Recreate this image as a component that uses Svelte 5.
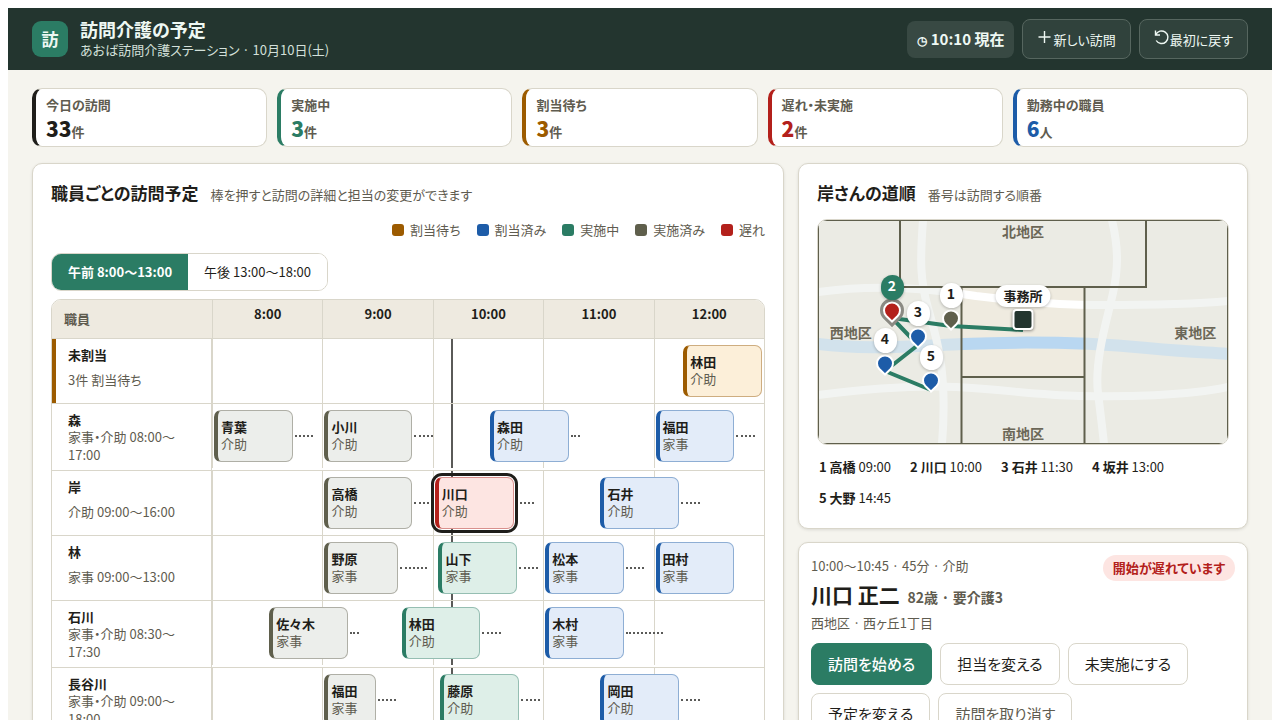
<script lang="ts">
  type Status = 'waiting' | 'assigned' | 'active' | 'done' | 'late';

  interface Visit {
    name: string;
    kind: string;
    start: string;
    minutes: number;
    status: Status;
    travel?: number;
  }

  interface StaffRow {
    name: string;
    note: string;
    visits: Visit[];
  }

  const statusLabels: { status: Status; label: string }[] = [
    { status: 'waiting', label: '割当待ち' },
    { status: 'assigned', label: '割当済み' },
    { status: 'active', label: '実施中' },
    { status: 'done', label: '実施済み' },
    { status: 'late', label: '遅れ' }
  ];

  const stats = [
    { label: '今日の訪問', value: 33, unit: '件', tone: 'ink' },
    { label: '実施中', value: 3, unit: '件', tone: 'active' },
    { label: '割当待ち', value: 3, unit: '件', tone: 'waiting' },
    { label: '遅れ・未実施', value: 2, unit: '件', tone: 'late' },
    { label: '勤務中の職員', value: 6, unit: '人', tone: 'assigned' }
  ];

  const rows: StaffRow[] = [
    {
      name: '未割当',
      note: '3件 割当待ち',
      visits: [{ name: '林田', kind: '介助', start: '12:15', minutes: 45, status: 'waiting' }]
    },
    {
      name: '森',
      note: '家事・介助 08:00〜17:00',
      visits: [
        { name: '青葉', kind: '介助', start: '8:00', minutes: 45, status: 'done', travel: 10 },
        { name: '小川', kind: '介助', start: '9:00', minutes: 50, status: 'done', travel: 10 },
        { name: '森田', kind: '介助', start: '10:30', minutes: 45, status: 'assigned', travel: 5 },
        { name: '福田', kind: '家事', start: '12:00', minutes: 45, status: 'assigned', travel: 10 }
      ]
    },
    {
      name: '岸',
      note: '介助 09:00〜16:00',
      visits: [
        { name: '高橋', kind: '介助', start: '9:00', minutes: 50, status: 'done', travel: 10 },
        { name: '川口', kind: '介助', start: '10:00', minutes: 45, status: 'late', travel: 10 },
        { name: '石井', kind: '介助', start: '11:30', minutes: 45, status: 'assigned', travel: 10 }
      ]
    },
    {
      name: '林',
      note: '家事 09:00〜13:00',
      visits: [
        { name: '野原', kind: '家事', start: '9:00', minutes: 42, status: 'done', travel: 15 },
        { name: '山下', kind: '家事', start: '10:02', minutes: 45, status: 'active', travel: 10 },
        { name: '松本', kind: '家事', start: '11:00', minutes: 45, status: 'assigned', travel: 10 },
        { name: '田村', kind: '家事', start: '12:00', minutes: 45, status: 'assigned' }
      ]
    },
    {
      name: '石川',
      note: '家事・介助 08:30〜17:30',
      visits: [
        { name: '佐々木', kind: '家事', start: '8:30', minutes: 45, status: 'done', travel: 5 },
        { name: '林田', kind: '介助', start: '9:42', minutes: 45, status: 'active', travel: 10 },
        { name: '木村', kind: '家事', start: '11:00', minutes: 45, status: 'assigned', travel: 20 }
      ]
    },
    {
      name: '長谷川',
      note: '家事・介助 09:00〜18:00',
      visits: [
        { name: '福田', kind: '家事', start: '9:00', minutes: 30, status: 'done', travel: 10 },
        { name: '藤原', kind: '介助', start: '10:03', minutes: 45, status: 'active', travel: 10 },
        { name: '岡田', kind: '介助', start: '11:30', minutes: 45, status: 'assigned', travel: 10 }
      ]
    }
  ];

  // x and y are the tip of the pin, in map units (410 x 224)
  const stops = [
    { no: 1, name: '高橋', time: '09:00', x: 133, y: 108, status: 'done' },
    { no: 2, name: '川口', time: '10:00', x: 74, y: 100, status: 'late' },
    { no: 3, name: '石井', time: '11:30', x: 100, y: 126, status: 'assigned' },
    { no: 4, name: '坂井', time: '13:00', x: 67, y: 153, status: 'assigned' },
    { no: 5, name: '大野', time: '14:45', x: 113, y: 170, status: 'assigned' }
  ];

  const periods = [
    { id: 'am', label: '午前 8:00〜13:00', from: 8 },
    { id: 'pm', label: '午後 13:00〜18:00', from: 13 }
  ];

  const NOW = '10:10';
  const SPAN = 5 * 60;

  let period = $state('am');
  let selected = $state('川口');

  const firstHour = $derived(periods.find((p) => p.id === period)?.from ?? 8);
  const hours = $derived([0, 1, 2, 3, 4].map((i) => firstHour + i));

  function toMinutes(time: string) {
    const [h, m] = time.split(':').map(Number);
    return h * 60 + m;
  }

  function offset(time: string, extra = 0) {
    return ((toMinutes(time) + extra - firstHour * 60) / SPAN) * 100;
  }

  function isVisible(time: string) {
    const x = offset(time);
    return x >= 0 && x < 100;
  }

  function reset() {
    period = 'am';
    selected = '川口';
  }
</script>

<div class="page">
  <header class="topbar">
    <div class="logo" aria-hidden="true">訪</div>
    <div class="heading">
      <h1>訪問介護の予定</h1>
      <p>あおば訪問介護ステーション · 10月10日(土)</p>
    </div>
    <div class="actions">
      <span class="clock"><span class="clock-icon">◷</span> {NOW} 現在</span>
      <button class="ghost">
        <svg width="16" height="16" viewBox="0 0 16 16" aria-hidden="true">
          <path d="M7.5 2v12M1.5 8h12" />
        </svg>新しい訪問
      </button>
      <button class="ghost" onclick={reset}>
        <svg width="16" height="16" viewBox="0 0 16 16" aria-hidden="true">
          <path d="M1.5 1.5v4.5H6M1.8 5.8A6.3 6.3 0 1 1 2.2 11.5" />
        </svg>最初に戻す
      </button>
    </div>
  </header>

  <main>
    <section class="stats">
      {#each stats as stat (stat.label)}
        <div class="stat {stat.tone}">
          <span class="stat-label">{stat.label}</span>
          <span class="stat-value"><strong>{stat.value}</strong>{stat.unit}</span>
        </div>
      {/each}
    </section>

    <div class="columns">
      <section class="panel">
        <div class="panel-head">
          <h2>職員ごとの訪問予定</h2>
          <span class="hint">棒を押すと訪問の詳細と担当の変更ができます</span>
        </div>
        <ul class="legend">
          {#each statusLabels as item (item.status)}
            <li class={item.status}>{item.label}</li>
          {/each}
        </ul>
        <div class="tabs">
          {#each periods as p (p.id)}
            <button class:on={period === p.id} aria-pressed={period === p.id} onclick={() => (period = p.id)}>
              {p.label}
            </button>
          {/each}
        </div>

        <div class="board">
          <div class="row board-head">
            <div class="corner">職員</div>
            <div class="hours">
              {#each hours as hour (hour)}
                <span>{hour}:00</span>
              {/each}
            </div>
          </div>
          {#each rows as row (row.name)}
            <div class="row">
              <div class="staff" class:unassigned={row.name === '未割当'}>
                <strong>{row.name}</strong>
                <span>{row.note}</span>
              </div>
              <div class="track">
                {#each hours as hour (hour)}
                  <span class="slot"></span>
                {/each}
                {#if isVisible(NOW)}
                  <span class="now" style="left: {offset(NOW)}%"></span>
                {/if}
                {#each row.visits as visit (visit.start)}
                  {#if isVisible(visit.start)}
                    {#if visit.travel}
                      <span
                        class="travel"
                        style="left: {offset(visit.start, visit.minutes)}%; width: {(visit.travel / SPAN) * 100}%"
                      ></span>
                    {/if}
                    <button
                      class="visit {visit.status}"
                      class:selected={visit.name === selected}
                      style="left: calc({offset(visit.start)}% + 2px); width: calc({(visit.minutes / SPAN) * 100}% - 4px)"
                      onclick={() => (selected = visit.name)}
                    >
                      <strong>{visit.name}</strong>
                      <span>{visit.kind}</span>
                    </button>
                  {/if}
                {/each}
              </div>
            </div>
          {/each}
        </div>
      </section>

      <div class="side">
        <section class="panel">
          <div class="panel-head">
            <h2>岸さんの道順</h2>
            <span class="hint">番号は訪問する順番</span>
          </div>
          <div class="map">
            <svg class="ground" viewBox="0 0 410 224" aria-hidden="true">
              <rect width="410" height="224" fill="#efebe0" />
              <path class="river" d="M0 124C45 130 95 126 145 124C215 121 275 123 329 128S390 132 410 134" />
              <path class="road" d="M0 72C50 65 105 67 158 76C215 83 250 85 279 85S370 85 410 81" />
              <path class="road" d="M0 175C40 170 90 165 138 167C190 170 220 175 262 176S370 176 410 167" />
              <path class="road" d="M105 0C102 40 102 60 110 88S130 150 124 224" />
              <path class="road" d="M294 0C301 30 300 50 295 73S276 140 280 173S284 205 286 224" />
              <path class="zone" d="M82 0H328V67H82Z" />
              <path class="zone" d="M0 0H82V67H143.5V224H0Z" />
              <path class="zone" d="M328 0H410V224H266.5V67H328Z" />
              <path class="zone" d="M143.5 157H266.5V224H143.5Z" />
              <path class="zone-line" d="M0 0H410V224H0ZM82 0V67H328V0M143.5 67V224M266.5 67V224M143.5 157H266.5" />
              <path class="route" d="M205 110L133 106L74 98L100 125L67 151L113 170" />
            </svg>
            <span class="area north">北地区</span>
            <span class="area west">西地区</span>
            <span class="area east">東地区</span>
            <span class="area south">南地区</span>
            <div class="office">
              <span>事務所</span>
              <i></i>
            </div>
            {#each stops as stop (stop.no)}
              <button
                class="stop {stop.status}"
                class:selected={stop.name === selected}
                style="left: {(stop.x / 410) * 100}%; top: {(stop.y / 224) * 100}%"
                aria-label="{stop.no} {stop.name}"
                onclick={() => (selected = stop.name)}
              >
                <span class="badge">{stop.no}</span>
                <svg width="26" height="30" viewBox="0 0 26 30" aria-hidden="true">
                  <path class="halo" d="M13 24L6.6 17.6A9 9 0 1 1 19.4 17.6Z" />
                  <path class="drop" d="M13 22.5L7.3 17A8 8 0 1 1 18.7 17Z" />
                </svg>
              </button>
            {/each}
          </div>
          <ol class="order">
            {#each stops as stop (stop.no)}
              <li><strong>{stop.no} {stop.name}</strong> {stop.time}</li>
            {/each}
          </ol>
        </section>

        <section class="panel detail">
          <div class="detail-top">
            <span>10:00〜10:45 · 45分 · 介助</span>
            <span class="alert">開始が遅れています</span>
          </div>
          <h3>川口 正二 <small>82歳 · 要介護3</small></h3>
          <p>西地区 · 西ヶ丘1丁目</p>
          <div class="buttons">
            <button class="primary">訪問を始める</button>
            <button>担当を変える</button>
            <button>未実施にする</button>
            <button>予定を変える</button>
            <button class="quiet">訪問を取り消す</button>
          </div>
        </section>
      </div>
    </div>
  </main>
</div>

<style>
  :global(body) {
    margin: 8px;
    background: #fff;
  }

  .page {
    --ink: #1f1e1a;
    --muted: #5f5c50;
    --line: #d9d6ca;
    --green: #2b7c64;
    --blue: #1d5ca8;
    --amber: #9c5b00;
    --olive: #5f5f4c;
    --red: #b3201b;
    background: #f5f4ee;
    color: var(--ink);
    font-family: 'Noto Sans CJK JP', 'Noto Sans', sans-serif;
    font-size: 13px;
    line-height: 18px;
    font-feature-settings: 'palt';
  }

  .page *,
  .page {
    box-sizing: border-box;
  }

  h1,
  h2,
  h3,
  p,
  ul,
  ol {
    margin: 0;
    padding: 0;
    list-style: none;
  }

  button {
    font: inherit;
    font-feature-settings: inherit;
    color: inherit;
    cursor: pointer;
  }

  .waiting { --tone: var(--amber); --tint: #fcefd9; }
  .assigned { --tone: var(--blue); --tint: #e3ecf9; }
  .active { --tone: var(--green); --tint: #deefe8; }
  .done { --tone: var(--olive); --tint: #eceeeb; }
  .late { --tone: var(--red); --tint: #fde5e2; }
  .ink { --tone: var(--ink); }

  .topbar {
    display: flex;
    align-items: center;
    gap: 12px;
    padding: 10px 24px;
    background: #23352f;
    color: #eef8f3;
  }

  .logo {
    display: grid;
    place-items: center;
    width: 36px;
    height: 36px;
    border-radius: 9px;
    background: var(--green);
    font-size: 17px;
    font-weight: 700;
  }

  .heading {
    flex: 1;
  }

  h1 {
    font-size: 18px;
    line-height: 22px;
  }

  .heading p {
    color: #d3e0da;
    line-height: 20px;
  }

  .actions {
    display: flex;
    align-items: center;
    gap: 8px;
  }

  .clock {
    padding: 9px 10px;
    border-radius: 8px;
    background: #384943;
    font-size: 15px;
    font-weight: 700;
  }

  .clock-icon {
    font-size: 12px;
  }

  .ghost {
    height: 40px;
    padding: 0 14px;
    border: 1px solid #56665f;
    border-radius: 8px;
    background: #30423c;
  }

  .ghost svg {
    fill: none;
    stroke: currentColor;
    stroke-width: 1.4;
    vertical-align: 0;
  }

  main {
    padding: 18px 24px 24px;
  }

  .stats {
    display: grid;
    grid-template-columns: repeat(5, 1fr);
    gap: 10px;
    margin-bottom: 16px;
  }

  .stat {
    display: flex;
    flex-direction: column;
    gap: 2px;
    padding: 7px 10px 0;
    border: 1px solid var(--line);
    border-left: 4px solid var(--tone);
    border-radius: 10px;
    background: #fff;
    color: var(--muted);
    font-weight: 600;
  }

  .stat-value {
    height: 30px;
    line-height: 24px;
  }

  .stat strong {
    color: var(--tone);
    font-size: 21px;
  }

  .columns {
    display: grid;
    grid-template-columns: minmax(0, 1fr) 450px;
    align-items: start;
    gap: 14px;
  }

  .side {
    display: grid;
    gap: 13px;
  }

  .panel {
    min-width: 0;
    padding: 18px;
    border: 1px solid var(--line);
    border-radius: 10px;
    background: #fff;
    box-shadow: 0 1px 3px rgba(40, 40, 30, 0.12);
  }

  .panel-head {
    display: flex;
    align-items: baseline;
    gap: 12px;
  }

  h2 {
    font-size: 17px;
    line-height: 22px;
  }

  .hint {
    color: var(--muted);
  }

  .legend {
    display: flex;
    justify-content: flex-end;
    gap: 16px;
    margin: 17px 0 14px;
    color: var(--muted);
  }

  .legend li {
    display: flex;
    align-items: center;
    gap: 6px;
  }

  .legend li::before {
    content: '';
    width: 12px;
    height: 12px;
    border-radius: 3px;
    background: var(--tone);
  }

  .tabs {
    display: flex;
    width: fit-content;
    margin-bottom: 8px;
    border: 1px solid var(--line);
    border-radius: 10px;
    overflow: hidden;
  }

  .tabs button {
    height: 36px;
    padding: 0 16px;
    border: 0;
    background: #fff;
  }

  .tabs .on {
    background: var(--green);
    color: #fff;
    font-weight: 700;
  }

  .board {
    border: 1px solid var(--line);
    border-radius: 10px 10px 0 0;
    overflow: hidden;
  }

  .row {
    display: grid;
    grid-template-columns: 160px 1fr;
    align-items: start;
    border-bottom: 1px solid var(--line);
  }

  .row:last-child {
    border-bottom: 0;
  }

  .board-head {
    align-items: stretch;
    height: 39px;
    background: #eeeae0;
    font-weight: 700;
  }

  .corner {
    padding: 10px 12px;
    color: var(--muted);
  }

  .hours,
  .track {
    display: grid;
    grid-template-columns: repeat(5, 1fr);
  }

  .hours span {
    padding-top: 5px;
    border-left: 1px solid var(--line);
    text-align: center;
  }

  .staff {
    display: grid;
    min-height: 64px;
    padding: 7px 16px 6px;
    border-right: 1px solid var(--line);
  }

  .staff strong {
    line-height: 17px;
  }

  .staff span {
    color: var(--muted);
  }

  .staff.unassigned {
    padding-left: 12px;
    border-left: 4px solid var(--amber);
  }

  .track {
    position: relative;
    height: 64px;
  }

  .slot {
    border-left: 1px solid var(--line);
  }

  .now {
    position: absolute;
    top: 0;
    bottom: 0;
    width: 2px;
    background: #5a5a58;
  }

  .travel {
    position: absolute;
    top: 31px;
    border-top: 2px dotted #5a5a58;
  }

  .visit {
    position: absolute;
    top: 6px;
    display: flex;
    flex-direction: column;
    height: 52px;
    padding: 7px 3px;
    border: 1px solid color-mix(in srgb, var(--tone) 50%, #fff);
    border-left: 4px solid var(--tone);
    border-radius: 7px;
    background: var(--tint);
    line-height: 17px;
    text-align: left;
  }

  .visit span {
    color: var(--muted);
  }

  .visit.selected {
    outline: 3px solid var(--ink);
    outline-offset: 1px;
  }

  .map {
    position: relative;
    margin-top: 15px;
    border: 1px solid var(--line);
    border-radius: 10px;
    overflow: hidden;
  }

  .ground {
    display: block;
    width: 100%;
    fill: none;
  }

  .river {
    stroke: #b9d7f1;
    stroke-width: 12;
  }

  .road {
    stroke: #fff;
    stroke-width: 8;
  }

  .zone {
    fill: #e8ebe8;
    fill-opacity: 0.55;
  }

  .zone-line {
    stroke: var(--olive);
    stroke-width: 2;
  }

  .route {
    stroke: var(--green);
    stroke-width: 4;
    stroke-linejoin: round;
  }

  .area {
    position: absolute;
    color: #6b6757;
    font-size: 14px;
    font-weight: 700;
    white-space: nowrap;
    transform: translate(-50%, -50%);
  }

  .north { left: 50%; top: 5%; }
  .west { left: 8%; top: 50%; }
  .east { left: 92%; top: 50%; }
  .south { left: 50%; top: 95%; }

  .office {
    position: absolute;
    left: 50%;
    top: 49%;
    display: flex;
    flex-direction: column;
    align-items: center;
    gap: 2px;
    transform: translate(-50%, -100%);
  }

  .office span {
    padding: 2px 8px;
    border-radius: 12px;
    background: #fff;
    font-weight: 700;
    white-space: nowrap;
    box-shadow: 0 1px 3px rgba(0, 0, 0, 0.25);
  }

  .office i {
    width: 21px;
    height: 21px;
    border: 2px solid #fff;
    border-radius: 4px;
    background: #23352f;
    box-shadow: 0 1px 3px rgba(0, 0, 0, 0.4);
  }

  .stop {
    position: absolute;
    display: flex;
    flex-direction: column;
    align-items: center;
    padding: 0;
    border: 0;
    background: none;
    transform: translate(-50%, -45px);
  }

  .badge {
    z-index: 1;
    width: 23px;
    height: 25px;
    border-radius: 12px;
    background: #fff;
    font-size: 14px;
    font-weight: 700;
    line-height: 20px;
    box-shadow: 0 1px 3px rgba(0, 0, 0, 0.25);
  }

  .stop svg {
    margin-top: -1px;
    fill: none;
    overflow: visible;
  }

  .drop {
    fill: var(--tone);
    stroke: #fff;
    stroke-width: 2;
  }

  .stop.selected .badge {
    background: var(--green);
    color: #fff;
  }

  .stop.selected .halo {
    stroke: #8b8a83;
    stroke-width: 6;
  }

  .order {
    display: flex;
    flex-wrap: wrap;
    gap: 9px 19px;
    padding: 11px 2px 1px;
    line-height: 22px;
  }

  .detail {
    padding: 12px;
  }

  .detail-top {
    display: flex;
    justify-content: space-between;
    height: 26px;
    color: var(--muted);
    line-height: 22px;
  }

  .alert {
    padding: 2px 10px;
    border-radius: 13px;
    background: #fde5e2;
    color: var(--red);
    font-weight: 700;
  }

  h3 {
    font-size: 21px;
    line-height: 26px;
  }

  h3 small {
    margin-left: 3px;
    color: var(--muted);
    font-size: 14px;
    font-weight: 600;
    line-height: 14px;
  }

  .detail p {
    margin-top: 7px;
    color: var(--muted);
  }

  .buttons {
    display: flex;
    flex-wrap: wrap;
    gap: 8px;
    margin-top: 11px;
  }

  .buttons button {
    height: 42px;
    padding: 0 16px;
    border: 1px solid var(--line);
    border-radius: 8px;
    background: #fff;
    font-size: 15px;
  }

  .buttons .primary {
    border-color: var(--green);
    background: var(--green);
    color: #fff;
    font-weight: 500;
  }

  .buttons .quiet {
    color: var(--muted);
  }
</style>
